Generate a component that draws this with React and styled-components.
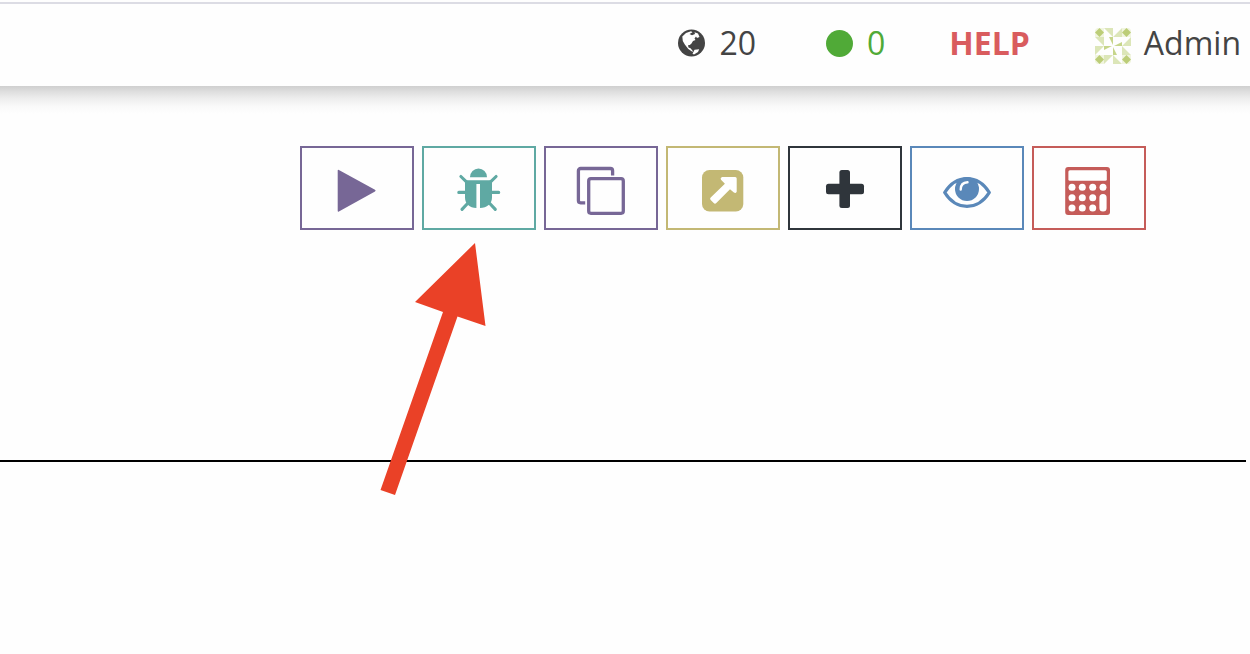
import React from "react";
import styled, { createGlobalStyle } from "styled-components";

const GlobalStyle = createGlobalStyle`
  * { box-sizing: border-box; }
  body {
    margin: 0;
    min-height: 100vh;
    background: #fefefe;
    color: #444;
    font-family: "Open Sans", "Noto Sans", sans-serif;
    font-size: 32px;
    line-height: 44px;
  }
`;

const Header = styled.header`
  margin-top: 2px;
  border-top: 2px solid #dcdce4;
  height: 84px;
  display: flex;
  align-items: center;
  justify-content: flex-end;
  padding: 0 9px 4px 0;
`;

const HeaderShadow = styled.div`
  height: 28px;
  background: linear-gradient(#cfcfcf, #dedede 20%, #eee 45%, #fafafa 75%, #fefefe);
`;

const HeaderLink = styled.a`
  display: flex;
  align-items: center;
  gap: ${(p) => p.$gap || 14}px;
  margin-left: ${(p) => p.$space || 0}px;
  color: ${(p) => p.$color || "#444"};
  font-weight: ${(p) => (p.$bold ? 700 : 400)};
  text-decoration: none;
`;

const Dot = styled.span`
  width: 27px;
  height: 27px;
  border-radius: 50%;
  background: currentColor;
`;

const Toolbar = styled.div`
  display: flex;
  justify-content: flex-end;
  gap: 8px;
  padding: 32px 104px 0 0;
`;

const ToolButton = styled.button`
  width: 114px;
  height: 84px;
  padding: 0;
  display: flex;
  align-items: center;
  justify-content: center;
  background: transparent;
  border: 2px solid ${(p) => p.$color};
  color: ${(p) => p.$color};
  cursor: pointer;
`;

const Main = styled.main`
  position: relative;
  padding-bottom: 64px;
`;

const Divider = styled.hr`
  margin: 230px 4px 0 0;
  border: 0;
  height: 2px;
  background: #000;
`;

const Pointer = styled.svg`
  position: absolute;
  z-index: 1;
  top: 128px;
  right: 760px;
  pointer-events: none;
`;

const Icon = ({ children }) => (
  <svg width="54" height="54" viewBox="0 0 54 54" fill="currentColor" aria-hidden="true">
    {children}
  </svg>
);

const PlayIcon = () => (
  <Icon>
    <path d="M7.7 9.6q0-1.4 1.2-.7L45 28.8q1.3.8 0 1.6L8.9 50.5q-1.2.6-1.2-.7z" />
  </Icon>
);

const BugIcon = () => (
  <Icon>
    <path d="M18 16.2a8.5 8.8 0 0 1 17 0z" />
    <path d="M13 19.2h27v17.3c0 6-5 10.5-12 10.5V23h-3.6v24c-6.8 0-11.4-4.5-11.4-10.5z" />
    <path
      d="M8.9 15.5l5.8 5.6M44.1 15.5l-5.8 5.6M6.8 31.4H14M39 31.4h7.7M10 48.4l6-6.4M43.3 48.4l-6-6.4"
      fill="none" stroke="currentColor" strokeWidth="3.1" strokeLinecap="round"
    />
  </Icon>
);

const CopyIcon = () => (
  <Icon>
    <g fill="none" stroke="currentColor" strokeWidth="3.3">
      <path d="M11.2 41.8H6.6a2.2 2.2 0 0 1-2.2-2.2V9.7a2.2 2.2 0 0 1 2.2-2.2h29.8a2.2 2.2 0 0 1 2.2 2.2v4.8" />
      <rect x="14.7" y="17.7" width="34.6" height="34.6" rx="2.2" />
    </g>
  </Icon>
);

const ExportIcon = () => (
  <Icon>
    <rect x="6" y="9" width="41.3" height="41.5" rx="7.5" />
    <path
      d="M26 16h13.2q1.5 0 1.5 1.5v13.3q-1 2-2.8.8L34 28.3 20.3 42q-1.3 1.3-2.6 0l-3-3q-1.3-1.3 0-2.6L28.9 22.7 25 18.8q-1.2-1.6 1-2.8z"
      fill="#fff"
    />
  </Icon>
);

const PlusIcon = () => (
  <Icon>
    <rect x="8" y="22.7" width="38" height="10.6" rx="2.5" />
    <rect x="21.4" y="9" width="10.6" height="38" rx="2.5" />
  </Icon>
);

const EyeIcon = () => (
  <Icon>
    <path
      d="M4.7 31.5C10 23 18 17.6 27 17.6S44 23 49.3 31.5C44 40 36 45.3 27 45.3S10 40 4.7 31.5z"
      fill="none" stroke="currentColor" strokeWidth="3.3" strokeLinejoin="round"
    />
    <circle cx="27" cy="28" r="12" />
    <path d="M20.7 28.5c0-4.3 2.5-7 6.8-7.2" fill="none" stroke="#fff" strokeWidth="2.4" strokeLinecap="round" />
  </Icon>
);

const CalculatorIcon = () => (
  <Icon>
    <rect x="3.2" y="6" width="44.8" height="48" rx="3" />
    <g fill="#fff">
      <rect x="6.4" y="9.3" width="38.4" height="10.4" rx="1.5" />
      {[26.3, 36.7, 47].map((y) =>
        [10, 20.3, 30.7].map((x) => <circle key={`${x}-${y}`} cx={x} cy={y} r="3.5" />)
      )}
      <circle cx="41" cy="26.3" r="3.5" />
      <rect x="37.4" y="33.1" width="7.2" height="17.5" rx="3.6" />
    </g>
  </Icon>
);

const GlobeIcon = () => (
  <svg width="27" height="28" viewBox="0 0 27 28" aria-hidden="true">
    <circle cx="13.5" cy="14" r="13.5" fill="#444" />
    <path
      d="M4.300 7.500L8 4l5-1.700 1.500 1L11.500 5l2.500 1.300 3-1.300-.5-1.700 3.500 1.200 1.500 3.500-2.500 1-1-1.500-1.500 2 1 1.500-2.500 1-1.500 2.500-1.700 1.500-1.800.2.500 2.300 2 .8 2.500 3-.7.500-4-2.800-3.500-4.500-2-3.500z"
      fill="#fff"
    />
    <path d="M16.500 20.800l4.700-.5-1.200 2.700-4 2.500-1.500-.8z" fill="#fff" />
  </svg>
);

const Avatar = () => (
  <svg width="38" height="44" viewBox="0 -6 38 44" aria-hidden="true">
    {[0, 90, 180, 270].map((angle) => (
      <g key={angle} transform={`rotate(${angle} 19 19)`}>
        <path d="M1 3l2-2h7v9H1z" fill="#f1f5e0" />
        <path d="M5.5 1l4.500 4.500-4.500 4.500L1 5.500z" fill="#bccd78" />
        <path d="M10 1h9v9zM28 1v9h-9z" fill="#dce6b8" />
        <path d="M15 10h4v8z" fill="#c6d58a" />
      </g>
    ))}
  </svg>
);

const tools = [
  { label: "Run", color: "#776796", Glyph: PlayIcon },
  { label: "Debug", color: "#5fa9a3", Glyph: BugIcon },
  { label: "Copy", color: "#776796", Glyph: CopyIcon },
  { label: "Export", color: "#c3b874", Glyph: ExportIcon },
  { label: "Add", color: "#2f353b", Glyph: PlusIcon },
  { label: "View", color: "#5a88b9", Glyph: EyeIcon },
  { label: "Calculate", color: "#c55c59", Glyph: CalculatorIcon },
];

export default function App() {
  return (
    <>
      <GlobalStyle />
      <Header>
        <HeaderLink href="#sites"><GlobeIcon />20</HeaderLink>
        <HeaderLink href="#status" $color="#50aa37" $space={70}><Dot />0</HeaderLink>
        <HeaderLink href="#help" $color="#d95c5e" $bold $space={64}>HELP</HeaderLink>
        <HeaderLink href="#account" $gap={12} $space={64}><Avatar />Admin</HeaderLink>
      </Header>
      <HeaderShadow />
      <Main>
        <Toolbar>
          {tools.map(({ label, color, Glyph }) => (
            <ToolButton key={label} type="button" aria-label={label} $color={color}>
              <Glyph />
            </ToolButton>
          ))}
        </Toolbar>
        <Pointer width="110" height="254" viewBox="0 0 110 254" aria-hidden="true">
          <path d="M95 1l10.500 83-28-9.500L15 253 .5 248 63 70 35 60z" fill="#ea4127" />
        </Pointer>
        <Divider />
      </Main>
    </>
  );
}
